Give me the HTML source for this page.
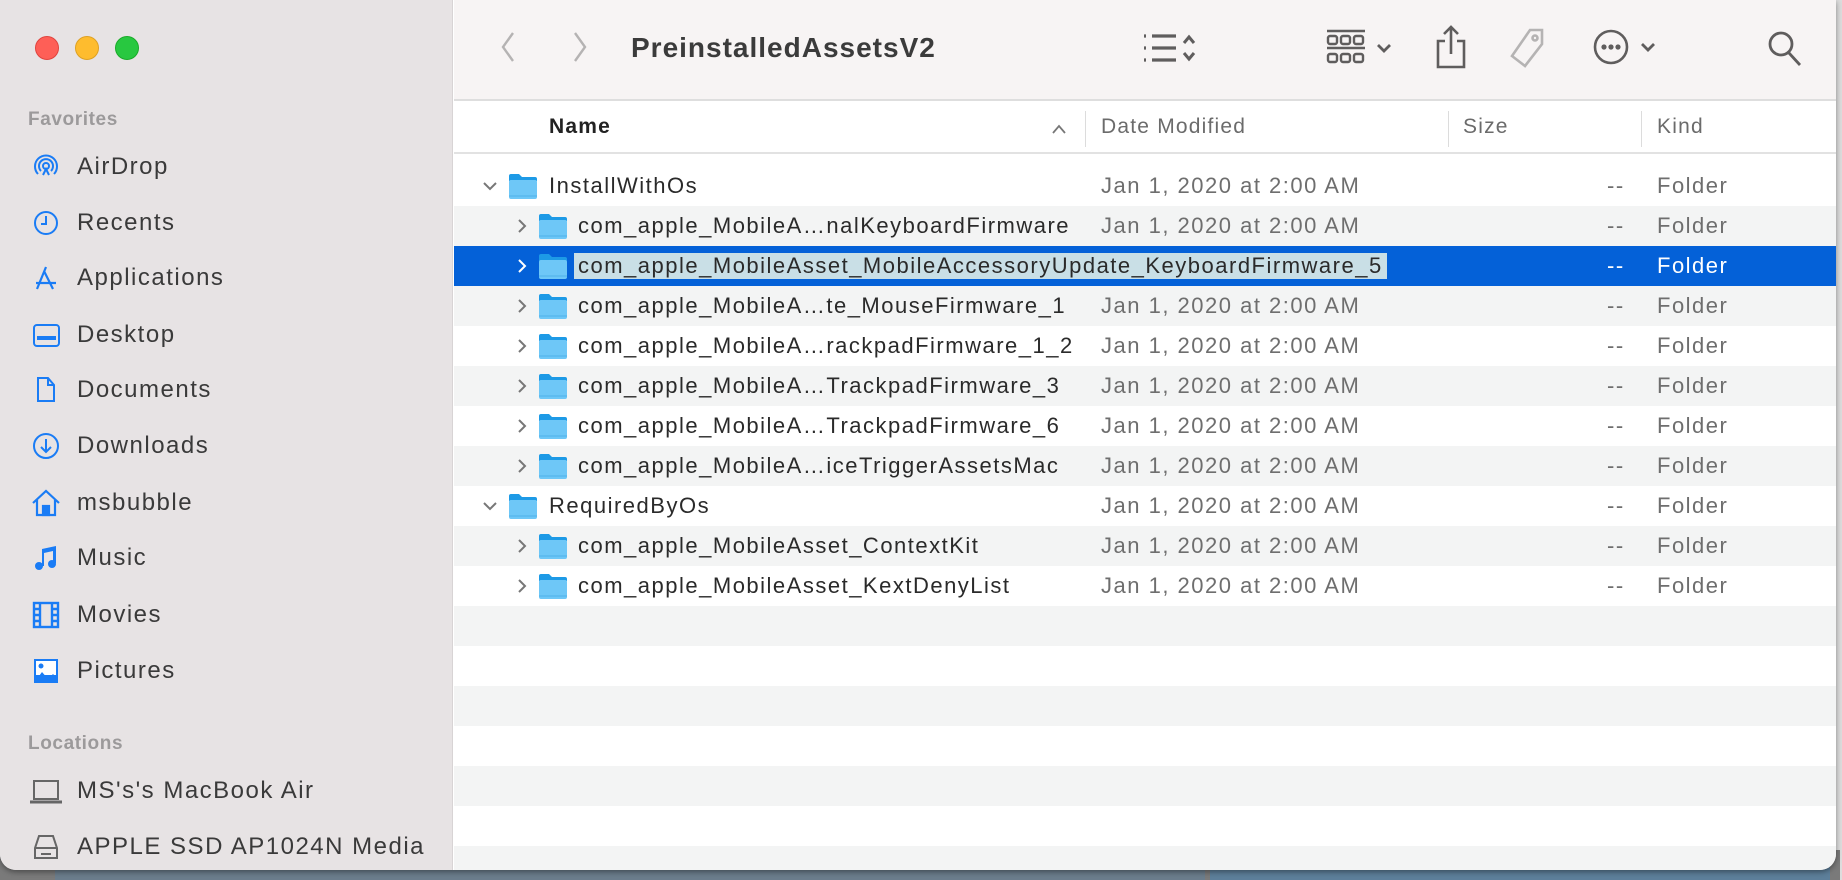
<!DOCTYPE html>
<html><head><meta charset="utf-8"><style>
*{margin:0;padding:0;box-sizing:border-box}
body{width:1842px;height:880px;overflow:hidden;background:#dcdcdc;font-family:"Liberation Sans",sans-serif;position:relative}
.under{position:absolute;left:0;top:850px;width:1842px;height:30px;background:#7a7a7a}
.under .b1{position:absolute;left:55px;top:0;width:1150px;height:30px;background:#6b7d8c}
.under .b2{position:absolute;left:1210px;top:0;width:620px;height:30px;background:#5d7f9a}
.under .b3{position:absolute;left:1840px;top:0;width:2px;height:30px;background:#ddd}
.win{position:absolute;left:0;top:0;width:1836px;height:870px;border-radius:0 0 16px 16px;overflow:hidden;background:#fff;box-shadow:0 2px 6px rgba(0,0,0,.4)}
.side{position:absolute;left:0;top:0;width:453px;height:870px;background:#e7e3e4;border-right:1px solid #d8d4d5}
.tl{position:absolute;top:36px;width:24px;height:24px;border-radius:50%}
.sec{position:absolute;left:28px;font-size:19px;color:#9c9a9b;font-weight:bold;letter-spacing:0.6px}
.it{position:absolute;left:77px;font-size:24px;color:#3a3a3a;line-height:28px;letter-spacing:1.5px;white-space:nowrap}
.ic{position:absolute;left:31px;width:30px;height:30px}
.tool{position:absolute;left:454px;top:0;right:0;height:101px;background:#f7f4f4;border-bottom:2px solid #dedede}
.title{position:absolute;left:631px;top:32px;font-size:28px;font-weight:bold;color:#3b3b3b;letter-spacing:1px}
.hdr{position:absolute;left:454px;top:103px;right:0;height:51px;border-bottom:2px solid #e2e2e2;background:#fff}
.hdr span{position:absolute;top:12px;font-size:21px;color:#6b6b6b;letter-spacing:1.2px}
.hdr i{position:absolute;top:8px;width:1px;height:36px;background:#dcdcdc}
.list{position:absolute;left:454px;top:166px;right:0;bottom:0}
.row{position:absolute;left:0;right:0;height:40px;font-size:22px;line-height:40px;color:#2a2a2a;letter-spacing:1.5px}
.row.alt{background:#f3f4f4}
.row.sel{background:#0461d8;color:#fff}
.row .d{position:absolute;left:647px;color:#6e6e6e}
.row .s{position:absolute;left:1153px;color:#6e6e6e}
.row .k{position:absolute;left:1203px;color:#6e6e6e}
.row.sel .d,.row.sel .s,.row.sel .k{color:#fff}
.row .n{position:absolute;white-space:nowrap}
.row svg{position:absolute}
.edit{background:#c9dfe6;color:#2a2a2a;padding:0 4px;line-height:26px;display:inline-block;margin-top:7px;margin-left:-4px}
</style></head><body>
<div class="under"><div class="b1"></div><div class="b2"></div><div class="b3"></div></div>
<div class="win">
<div class="side">
<div class="tl" style="left:35px;background:#fe5f57;border:1px solid #e0443e"></div>
<div class="tl" style="left:75px;background:#febc2e;border:1px solid #dea123"></div>
<div class="tl" style="left:115px;background:#28c840;border:1px solid #1aab29"></div>
<div class="sec" style="top:109px">Favorites</div>
<svg class="ic" style="top:152px" viewBox="0 0 30 30" fill="none" stroke="#1a7cf5" stroke-width="2"><circle cx="15" cy="14" r="3"/><path d="M10 19a7 7 0 1 1 10 0M7 22a11 11 0 1 1 16 0M12 23 15 17 18 23"/></svg>
<div class="it" style="top:153px">AirDrop</div>
<svg class="ic" style="top:208px" viewBox="0 0 30 30" fill="none" stroke="#1a7cf5" stroke-width="2"><circle cx="15" cy="15" r="11"/><path d="M15 8v8h-5"/></svg>
<div class="it" style="top:209px">Recents</div>
<svg class="ic" style="top:263px" viewBox="0 0 30 30" fill="none" stroke="#1a7cf5" stroke-width="2.2"><path d="M15 4 6 26M13 8l9 18M5 20h20"/></svg>
<div class="it" style="top:264px">Applications</div>
<svg class="ic" style="top:320px" viewBox="0 0 30 30" fill="none" stroke="#1a7cf5" stroke-width="2"><rect x="3" y="5" width="25" height="21" rx="3"/><path d="M6 18h19" stroke-width="4"/></svg>
<div class="it" style="top:321px">Desktop</div>
<svg class="ic" style="top:375px" viewBox="0 0 30 30" fill="none" stroke="#1a7cf5" stroke-width="2"><path d="M7 3h10l6 7v16H7zM17 3v7h6"/></svg>
<div class="it" style="top:376px">Documents</div>
<svg class="ic" style="top:431px" viewBox="0 0 30 30" fill="none" stroke="#1a7cf5" stroke-width="2"><circle cx="15" cy="15" r="12"/><path d="M15 8v13M10 16l5 5 5-5"/></svg>
<div class="it" style="top:432px">Downloads</div>
<svg class="ic" style="top:488px" viewBox="0 0 30 30" fill="none" stroke="#1a7cf5" stroke-width="2.2"><path d="M2 15 15 3l13 12M6 12v15h18V12"/><rect x="12" y="18" width="6" height="9" fill="#1a7cf5"/></svg>
<div class="it" style="top:489px">msbubble</div>
<svg class="ic" style="top:543px" viewBox="0 0 30 30" fill="#1a7cf5"><path d="M11 6 25 3v17h-3V8l-9 2v13h-2z"/><circle cx="8" cy="23" r="4"/><circle cx="21" cy="21" r="4"/></svg>
<div class="it" style="top:544px">Music</div>
<svg class="ic" style="top:600px" viewBox="0 0 30 30" fill="none" stroke="#1a7cf5" stroke-width="2.4"><rect x="3" y="3" width="24" height="24"/><path d="M9 3v24M21 3v24M3 9h6M3 15h6M3 21h6M21 9h6M21 15h6M21 21h6"/></svg>
<div class="it" style="top:601px">Movies</div>
<svg class="ic" style="top:656px" viewBox="0 0 30 30"><rect x="3" y="3" width="24" height="24" fill="#1a7cf5"/><rect x="5" y="5" width="20" height="14" fill="#fff"/><path d="M3 27 11 16l6 7 5-5 5 5v4z" fill="#1a7cf5"/><circle cx="10" cy="10" r="2.5" fill="#1a7cf5"/></svg>
<div class="it" style="top:657px">Pictures</div>
<div class="sec" style="top:733px">Locations</div>
<svg class="ic" style="top:776px;left:28px;width:36px" viewBox="0 0 36 30" fill="none" stroke="#666" stroke-width="2"><rect x="6" y="5" width="24" height="18"/><path d="M2 26h32" stroke-width="3"/></svg>
<div class="it" style="top:777px">MS's's MacBook Air</div>
<svg class="ic" style="top:832px" viewBox="0 0 30 30" fill="none" stroke="#666" stroke-width="2"><path d="M8 4h14l4 12v10H4V16z M4 16h22"/><path d="M10 22h10" stroke-width="2"/></svg>
<div class="it" style="top:833px">APPLE SSD AP1024N Media</div>
</div>
<div class="tool">
<svg style="position:absolute;left:44px;top:30px" width="20" height="34" viewBox="0 0 20 34" fill="none" stroke="#b5b3b3" stroke-width="2.4"><path d="M15 3 5 17l10 14"/></svg>
<svg style="position:absolute;left:116px;top:30px" width="20" height="34" viewBox="0 0 20 34" fill="none" stroke="#b5b3b3" stroke-width="2.4"><path d="M5 3l10 14-10 14"/></svg>
<svg style="position:absolute;left:688px;top:31px" width="58" height="34" viewBox="0 0 58 34" fill="none" stroke="#5f5d5d" stroke-width="3.2"><path d="M10 5h24M10 17h24M10 29h24M2 5h2M2 17h2M2 29h2"/><path d="M42 12l5-6 5 6M42 22l5 6 5-6" stroke-width="3"/></svg>
<svg style="position:absolute;left:871px;top:29px" width="72" height="38" viewBox="0 0 72 38" fill="none" stroke="#5f5d5d" stroke-width="2.4"><path d="M2 2h38M2 19h38"/><rect x="3" y="7" width="9" height="8" rx="2"/><rect x="16" y="7" width="9" height="8" rx="2"/><rect x="29" y="7" width="9" height="8" rx="2"/><rect x="3" y="25" width="9" height="8" rx="2"/><rect x="16" y="25" width="9" height="8" rx="2"/><rect x="29" y="25" width="9" height="8" rx="2"/><path d="M53 16l6 6 6-6" stroke-width="2.8"/></svg>
<svg style="position:absolute;left:980px;top:24px" width="34" height="46" viewBox="0 0 34 46" fill="none" stroke="#5f5d5d" stroke-width="2.6"><path d="M17 3v27M10 10l7-7 7 7M11 17H4v26h26V17h-7"/></svg>
<svg style="position:absolute;left:1054px;top:26px" width="40" height="44" viewBox="0 0 40 44" fill="none" stroke="#b5b3b3" stroke-width="2.6"><path d="M22 4h12v14L17 40 4 30z"/><circle cx="27" cy="12" r="2.5"/></svg>
<svg style="position:absolute;left:1138px;top:28px" width="68" height="40" viewBox="0 0 68 40" fill="none" stroke="#5f5d5d" stroke-width="2.6"><circle cx="19" cy="19" r="16"/><circle cx="12" cy="19" r="1.3" fill="#5f5d5d"/><circle cx="19" cy="19" r="1.3" fill="#5f5d5d"/><circle cx="26" cy="19" r="1.3" fill="#5f5d5d"/><path d="M50 16l6 6 6-6" stroke-width="2.8"/></svg>
<svg style="position:absolute;left:1312px;top:29px" width="38" height="40" viewBox="0 0 38 40" fill="none" stroke="#5f5d5d" stroke-width="2.8"><circle cx="15" cy="15" r="11"/><path d="M23 24l11 12"/></svg>
</div>
<div class="title">PreinstalledAssetsV2</div>
<div class="hdr">
<span style="left:95px;color:#222;font-weight:bold">Name</span>
<svg style="position:absolute;left:597px;top:20px" width="16" height="12" viewBox="0 0 16 12" fill="none" stroke="#777" stroke-width="1.8"><path d="M2 10l6-7 6 7"/></svg>
<i style="left:631px"></i><span style="left:647px">Date Modified</span>
<i style="left:994px"></i><span style="left:1009px">Size</span>
<i style="left:1187px"></i><span style="left:1203px">Kind</span>
</div>
<div class="list">
<svg width="0" height="0" style="position:absolute"><defs><symbol id="f" viewBox="0 0 30 28"><path d="M1 4a2 2 0 0 1 2-2h8l3 3h13a2 2 0 0 1 2 2v2H1z" fill="#1d9ae6"/><rect x="1" y="8" width="28" height="19" rx="2" fill="#6ec7f7"/><path d="M1 24h28" stroke="#4eb0ea" stroke-width="1"/></symbol></defs></svg>
<div class="row" style="top:0"><svg style="left:28px;top:14px" width="16" height="12" viewBox="0 0 16 12" fill="none" stroke="#777" stroke-width="2"><path d="M2 3l6 6 6-6"/></svg><svg style="left:54px;top:6px" width="30" height="28"><use href="#f"/></svg><span class="n" style="left:95px">InstallWithOs</span><span class="d">Jan 1, 2020 at 2:00 AM</span><span class="s">--</span><span class="k">Folder</span></div>
<div class="row alt" style="top:40px"><svg style="left:62px;top:12px" width="12" height="16" viewBox="0 0 12 16" fill="none" stroke="#777" stroke-width="2"><path d="M3 2l6 6-6 6"/></svg><svg style="left:84px;top:6px" width="30" height="28"><use href="#f"/></svg><span class="n" style="left:124px">com_apple_MobileA…nalKeyboardFirmware</span><span class="d">Jan 1, 2020 at 2:00 AM</span><span class="s">--</span><span class="k">Folder</span></div>
<div class="row sel" style="top:80px"><svg style="left:62px;top:12px" width="12" height="16" viewBox="0 0 12 16" fill="none" stroke="#fff" stroke-width="2"><path d="M3 2l6 6-6 6"/></svg><svg style="left:84px;top:6px" width="30" height="28"><use href="#f"/></svg><span class="n" style="left:124px"><span class="edit">com_apple_MobileAsset_MobileAccessoryUpdate_KeyboardFirmware_5</span></span><span class="s">--</span><span class="k">Folder</span></div>
<div class="row alt" style="top:120px"><svg style="left:62px;top:12px" width="12" height="16" viewBox="0 0 12 16" fill="none" stroke="#777" stroke-width="2"><path d="M3 2l6 6-6 6"/></svg><svg style="left:84px;top:6px" width="30" height="28"><use href="#f"/></svg><span class="n" style="left:124px">com_apple_MobileA…te_MouseFirmware_1</span><span class="d">Jan 1, 2020 at 2:00 AM</span><span class="s">--</span><span class="k">Folder</span></div>
<div class="row" style="top:160px"><svg style="left:62px;top:12px" width="12" height="16" viewBox="0 0 12 16" fill="none" stroke="#777" stroke-width="2"><path d="M3 2l6 6-6 6"/></svg><svg style="left:84px;top:6px" width="30" height="28"><use href="#f"/></svg><span class="n" style="left:124px">com_apple_MobileA…rackpadFirmware_1_2</span><span class="d">Jan 1, 2020 at 2:00 AM</span><span class="s">--</span><span class="k">Folder</span></div>
<div class="row alt" style="top:200px"><svg style="left:62px;top:12px" width="12" height="16" viewBox="0 0 12 16" fill="none" stroke="#777" stroke-width="2"><path d="M3 2l6 6-6 6"/></svg><svg style="left:84px;top:6px" width="30" height="28"><use href="#f"/></svg><span class="n" style="left:124px">com_apple_MobileA…TrackpadFirmware_3</span><span class="d">Jan 1, 2020 at 2:00 AM</span><span class="s">--</span><span class="k">Folder</span></div>
<div class="row" style="top:240px"><svg style="left:62px;top:12px" width="12" height="16" viewBox="0 0 12 16" fill="none" stroke="#777" stroke-width="2"><path d="M3 2l6 6-6 6"/></svg><svg style="left:84px;top:6px" width="30" height="28"><use href="#f"/></svg><span class="n" style="left:124px">com_apple_MobileA…TrackpadFirmware_6</span><span class="d">Jan 1, 2020 at 2:00 AM</span><span class="s">--</span><span class="k">Folder</span></div>
<div class="row alt" style="top:280px"><svg style="left:62px;top:12px" width="12" height="16" viewBox="0 0 12 16" fill="none" stroke="#777" stroke-width="2"><path d="M3 2l6 6-6 6"/></svg><svg style="left:84px;top:6px" width="30" height="28"><use href="#f"/></svg><span class="n" style="left:124px">com_apple_MobileA…iceTriggerAssetsMac</span><span class="d">Jan 1, 2020 at 2:00 AM</span><span class="s">--</span><span class="k">Folder</span></div>
<div class="row" style="top:320px"><svg style="left:28px;top:14px" width="16" height="12" viewBox="0 0 16 12" fill="none" stroke="#777" stroke-width="2"><path d="M2 3l6 6 6-6"/></svg><svg style="left:54px;top:6px" width="30" height="28"><use href="#f"/></svg><span class="n" style="left:95px">RequiredByOs</span><span class="d">Jan 1, 2020 at 2:00 AM</span><span class="s">--</span><span class="k">Folder</span></div>
<div class="row alt" style="top:360px"><svg style="left:62px;top:12px" width="12" height="16" viewBox="0 0 12 16" fill="none" stroke="#777" stroke-width="2"><path d="M3 2l6 6-6 6"/></svg><svg style="left:84px;top:6px" width="30" height="28"><use href="#f"/></svg><span class="n" style="left:124px">com_apple_MobileAsset_ContextKit</span><span class="d">Jan 1, 2020 at 2:00 AM</span><span class="s">--</span><span class="k">Folder</span></div>
<div class="row" style="top:400px"><svg style="left:62px;top:12px" width="12" height="16" viewBox="0 0 12 16" fill="none" stroke="#777" stroke-width="2"><path d="M3 2l6 6-6 6"/></svg><svg style="left:84px;top:6px" width="30" height="28"><use href="#f"/></svg><span class="n" style="left:124px">com_apple_MobileAsset_KextDenyList</span><span class="d">Jan 1, 2020 at 2:00 AM</span><span class="s">--</span><span class="k">Folder</span></div>
<div class="row alt" style="top:440px"></div>
<div class="row" style="top:480px"></div>
<div class="row alt" style="top:520px"></div>
<div class="row" style="top:560px"></div>
<div class="row alt" style="top:600px"></div>
<div class="row" style="top:640px"></div>
<div class="row alt" style="top:680px"></div>
</div>
</div>
</body></html>
